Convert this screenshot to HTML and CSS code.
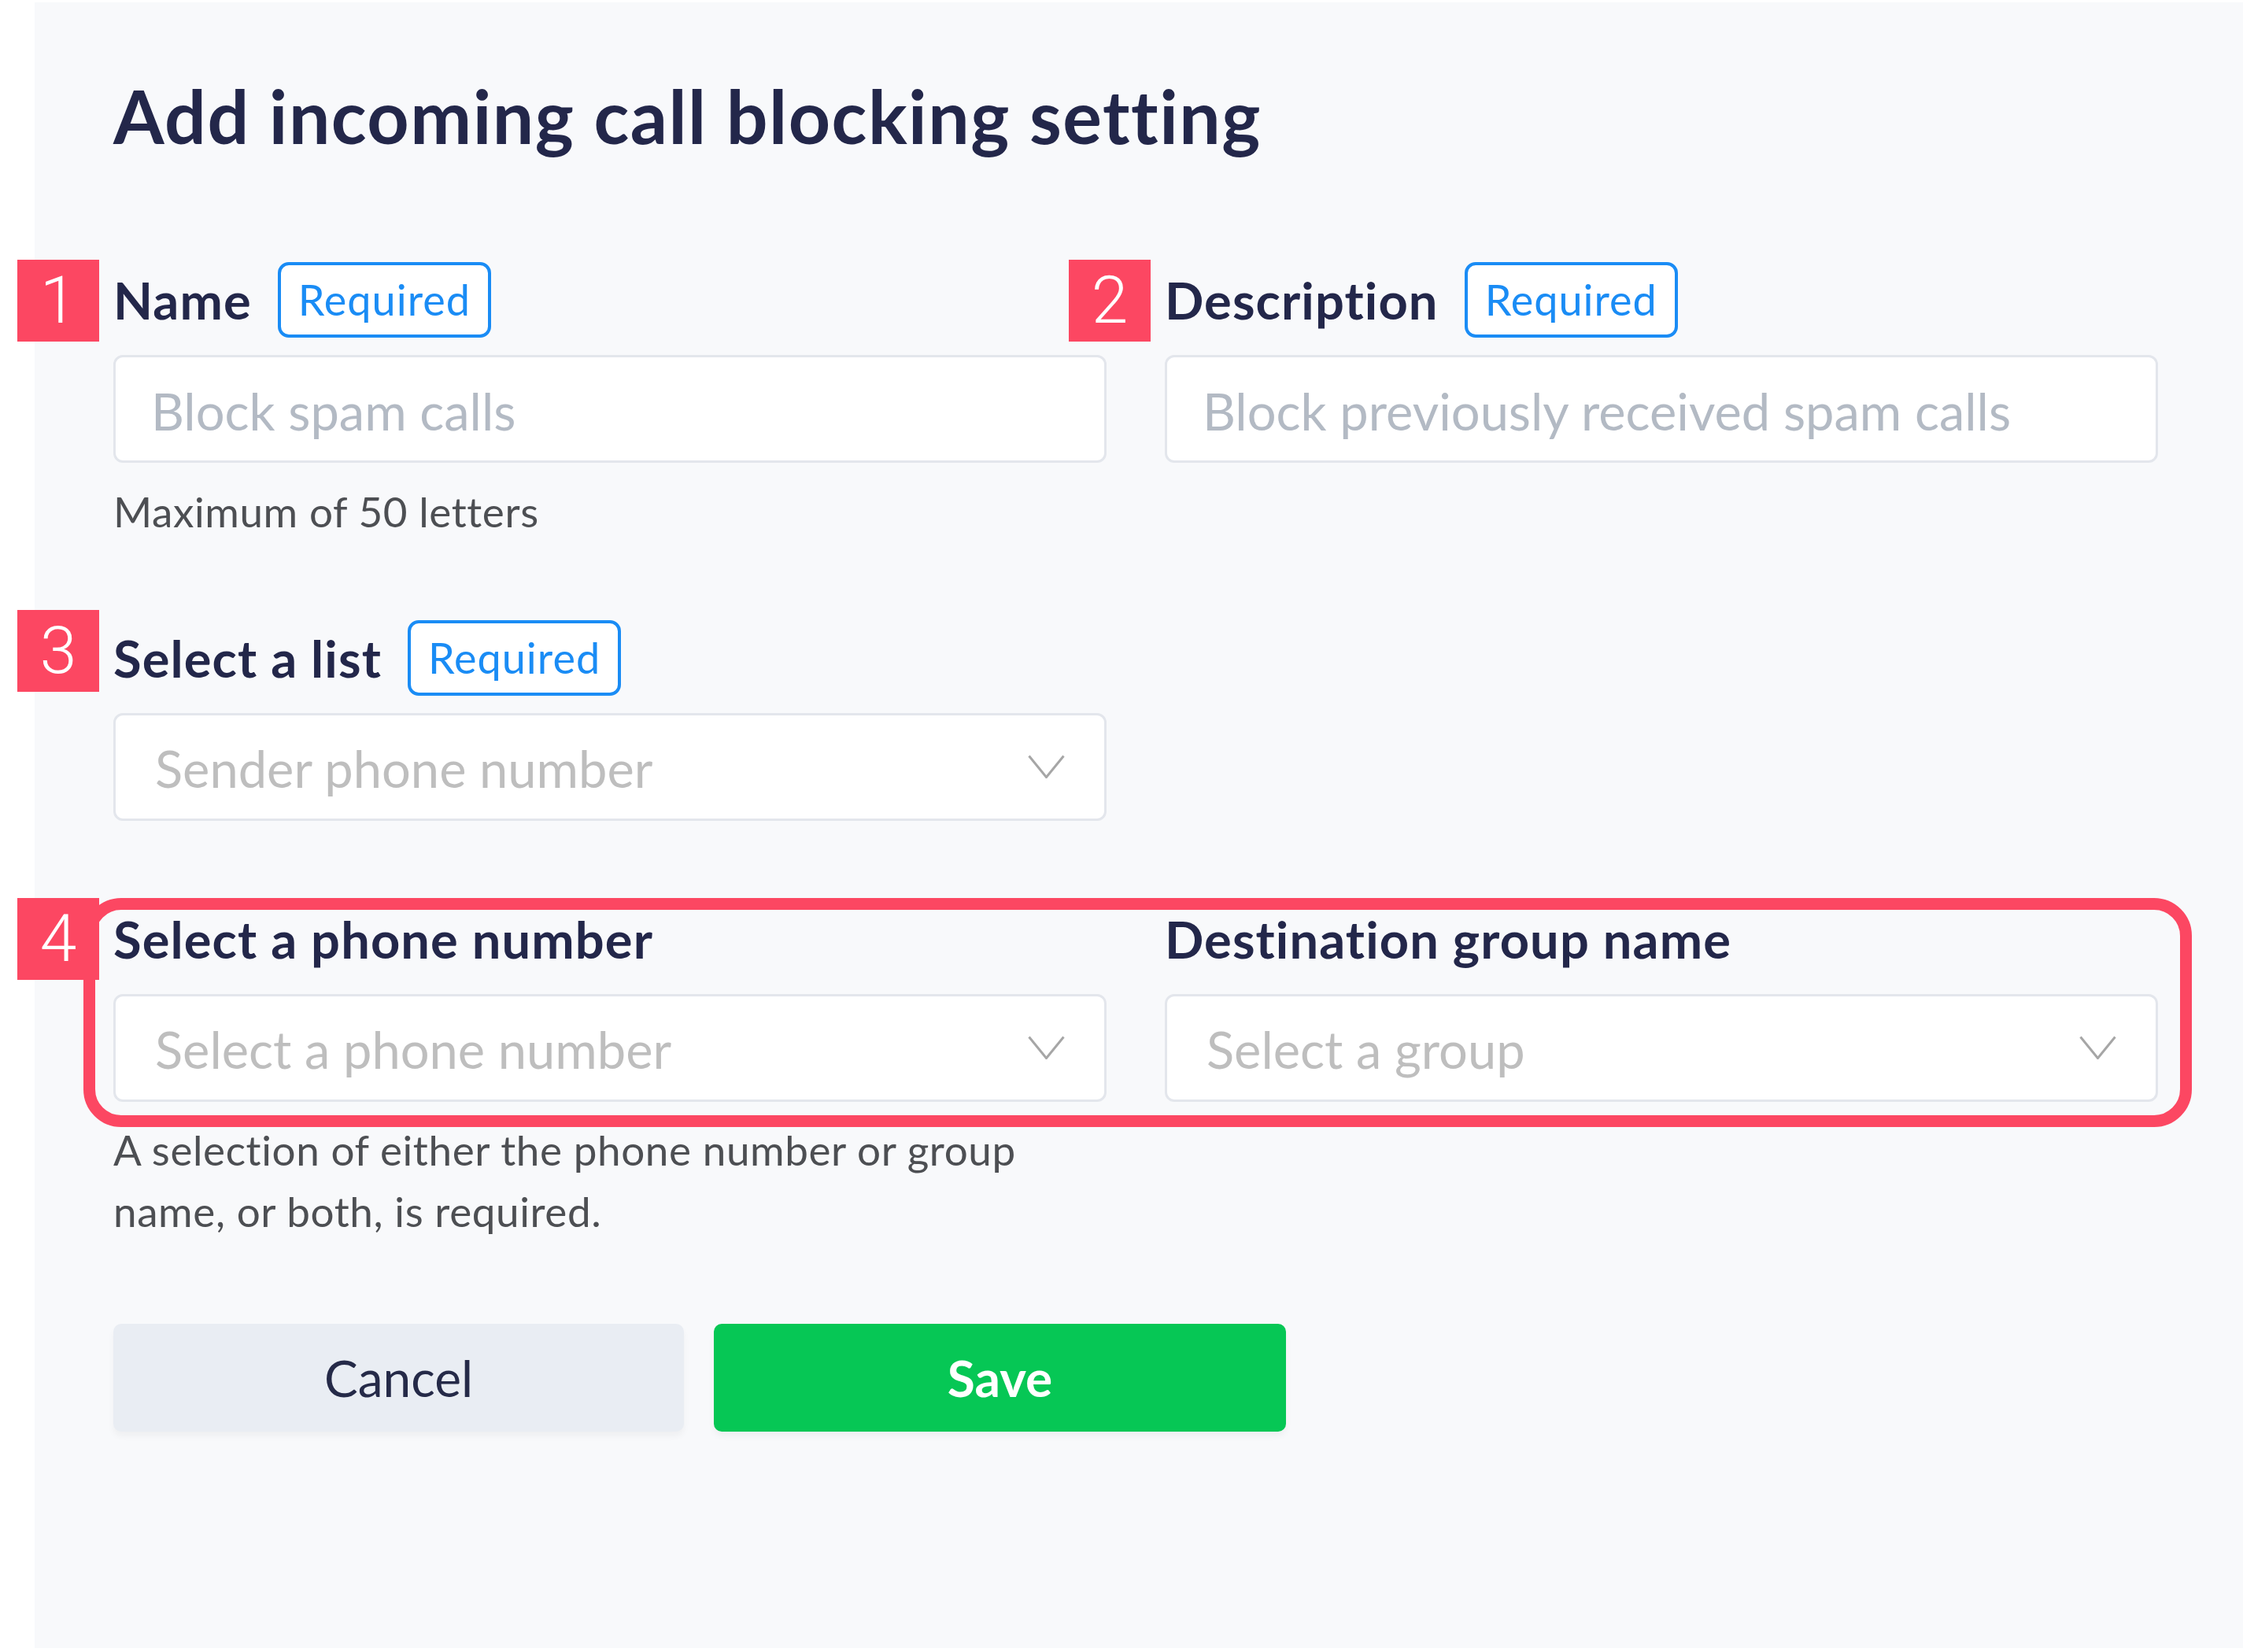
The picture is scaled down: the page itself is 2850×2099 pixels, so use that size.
FILE: index.html
```html
<!DOCTYPE html>
<html lang="en">
<head>
    <meta charset="UTF-8"/>
    <title>Add incoming call blocking setting</title>
    <link rel="stylesheet" href="styles.css">
</head>
<body>
<div class="panel">
    <h1 class="title">Add incoming call blocking setting</h1>

    <div class="row row-a">
        <div class="field">
            <span class="marker">1</span>
            <div class="label-row">
                <label for="name">Name</label>
                <span class="req">Required</span>
            </div>
            <input class="input" type="text" id="name" placeholder="Block spam calls">
            <p class="hint">Maximum of 50 letters</p>
        </div>
        <div class="field">
            <span class="marker">2</span>
            <div class="label-row">
                <label for="desc">Description</label>
                <span class="req">Required</span>
            </div>
            <input class="input" type="text" id="desc" placeholder="Block previously received spam calls">
        </div>
    </div>

    <div class="row row-b">
        <div class="field">
            <span class="marker marker-3">3</span>
            <div class="label-row">
                <label>Select a list</label>
                <span class="req">Required</span>
            </div>
            <div class="select">
                <span>Sender phone number</span>
                <svg class="chevron" width="47" height="30" viewBox="0 0 47 30"><polyline points="1.5,1.5 23.5,28.5 45.5,1.5"/></svg>
            </div>
        </div>
    </div>

    <div class="row row-c">
        <div class="highlight"></div>
        <div class="field">
            <span class="marker marker-4">4</span>
            <div class="label-row">
                <label>Select a phone number</label>
            </div>
            <div class="select">
                <span>Select a phone number</span>
                <svg class="chevron" width="47" height="30" viewBox="0 0 47 30"><polyline points="1.5,1.5 23.5,28.5 45.5,1.5"/></svg>
            </div>
        </div>
        <div class="field">
            <div class="label-row">
                <label>Destination group name</label>
            </div>
            <div class="select">
                <span>Select a group</span>
                <svg class="chevron" width="47" height="30" viewBox="0 0 47 30"><polyline points="1.5,1.5 23.5,28.5 45.5,1.5"/></svg>
            </div>
        </div>
    </div>
    <p class="hint hint-wide">A selection of either the phone number or group name, or both, is required.</p>

    <div class="actions">
        <button class="btn btn-cancel" type="button">Cancel</button>
        <button class="btn btn-save" type="submit">Save</button>
    </div>
</div>
</body>
</html>
```

FILE: styles.css
```css
* { box-sizing: border-box; }
html, body { margin: 0; background: #fff; }
body { font-family: Lato, "Noto Sans", sans-serif; color: #252a48; }

.panel { margin: 3px 0 0 44px; height: 2091px; background: #f8f9fb; padding: 89px 0 0 100px; }
.title { margin: 0; font-size: 93px; line-height: 1.2; font-weight: 700; letter-spacing: 1.5px; color: #23274a; }

.row { display: grid; grid-template-columns: 1262px 1262px; column-gap: 74px; position: relative; }
.row-a { margin-top: 129px; }
.row-b { margin-top: 99px; }
.row-c { margin-top: 102px; }
.field { position: relative; }

.label-row { display: flex; align-items: center; gap: 33px; height: 96px; margin-bottom: 22px; }
.label-row label { font-size: 65px; font-weight: 700; letter-spacing: 1.1px; color: #23274a; }
.req { display: flex; align-items: center; height: 96px; padding: 0 22px; border: 4px solid #1a8cf5; border-radius: 14px; background: #fff; color: #1a8cf5; font-size: 54px; letter-spacing: 1px; }

.input { display: block; width: 100%; height: 137px; padding: 6px 45px 0; border: 3px solid #e3e6ec; border-radius: 12px; background: #fff; font-family: inherit; font-size: 65px; outline: none; }
.input::placeholder { color: #b3bac4; }

.select { display: flex; align-items: center; justify-content: space-between; height: 137px; padding: 4px 50px 0 50px; border: 3px solid #e3e6ec; border-radius: 12px; background: #fff; font-size: 65px; color: #bebebe; }
.chevron { fill: none; stroke: #a6a6a6; stroke-width: 3; margin-top: -4px; }

.hint { margin: 23px 0 0; font-size: 53px; line-height: 78px; letter-spacing: .6px; color: #4d4f53; }
.hint-wide { width: 1262px; margin-top: 22px; }

.marker { position: absolute; left: -122px; top: -3px; z-index: 2; width: 104px; height: 104px; display: flex; align-items: center; justify-content: center; background: #fc4762; color: #fff; font: 300 84px Roboto, sans-serif; }
.marker-3 { top: -13px; }
.marker-4 { top: -4px; }

.highlight { position: absolute; left: -38px; top: -4px; width: 2679px; height: 291px; border: 15px solid #fc4762; border-radius: 48px; pointer-events: none; }

.actions { display: flex; gap: 38px; margin-top: 104px; }
.btn { width: 725px; height: 137px; border: 0; border-radius: 10px; font-family: inherit; font-size: 64px; box-shadow: 0 6px 8px rgba(0, 0, 0, .04); }
.btn-cancel { background: #e9edf3; color: #252a48; }
.btn-save { width: 727px; background: #06c755; color: #fff; font-weight: 700; }
```
